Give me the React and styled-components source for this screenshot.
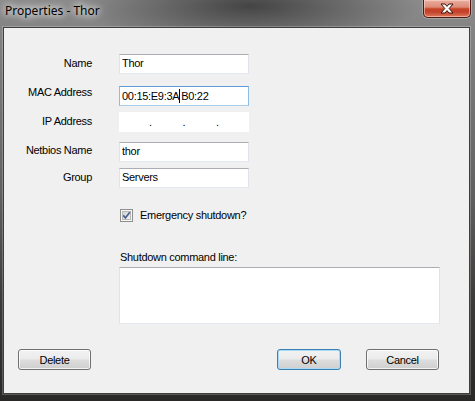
import React from 'react';
import styled, { createGlobalStyle } from 'styled-components';

const Global = createGlobalStyle`
  html, body { margin: 0; padding: 0; }
  body {
    width: 475px;
    height: 401px;
    overflow: hidden;
    font-family: "Liberation Sans", Arial, sans-serif;
  }
`;

const Window = styled.div`
  width: 475px;
  height: 401px;
  box-sizing: border-box;
  display: flex;
  flex-direction: column;
  padding: 0 5px 7px 3px;
  background:
    radial-gradient(ellipse 170px 40px at 250px 6px, rgba(45,45,45,0.75), rgba(45,45,45,0) 100%),
    linear-gradient(180deg, #8b8b8b 0px, #7c7c7c 60px, #626262 190px, #3d3b3a 300px, #2a2827 401px);
`;

const TitleBar = styled.div`
  height: 27px;
  display: flex;
  align-items: flex-start;
  justify-content: space-between;
  margin-right: -1px;
`;

const Title = styled.span`
  padding: 3px 0 0 2px;
  font-family: "Noto Sans", "Liberation Sans", sans-serif;
  font-size: 12px;
  line-height: 16px;
  color: #000;
  text-shadow:
    0 0 6px rgba(255, 255, 255, 0.95),
    0 0 10px rgba(255, 255, 255, 0.8),
    0 0 14px rgba(255, 255, 255, 0.6);
`;

const CloseButton = styled.div`
  width: 48px;
  height: 18px;
  box-sizing: border-box;
  display: flex;
  align-items: center;
  justify-content: center;
  border: 1px solid #4a1a10;
  border-top: none;
  border-radius: 0 0 5px 5px;
  background: linear-gradient(180deg, #eab0a2 0%, #dc8a76 42%, #c84428 52%, #c3412a 70%, #e0785a 100%);
  box-shadow: inset 0 0 0 1px rgba(255, 220, 210, 0.55), 0 0 0 1px rgba(255,255,255,0.25);
`;

const Client = styled.div`
  flex: 1;
  display: flex;
  flex-direction: column;
  background: #f0f0f0;
  border: 1px solid #3e3e3e;
  box-shadow: 0 0 0 1px rgba(255, 255, 255, 0.22);
  font-size: 11px;
  line-height: 13px;
  letter-spacing: -0.3px;
  color: #000;
`;

const Form = styled.div`
  display: flex;
  flex-direction: column;
  padding-top: 26px;
`;

const Row = styled.div`
  display: flex;
  align-items: flex-start;
  margin-top: ${p => p.$mt || 0}px;
`;

const Label = styled.div`
  width: 88px;
  margin-right: 27px;
  margin-top: ${p => p.$dy || 0}px;
  text-align: right;
  white-space: nowrap;
`;

const Field = styled.div`
  width: 130px;
  height: 20px;
  box-sizing: border-box;
  padding: 2px 2px;
  background: #fff;
  border: 1px solid;
  border-color: ${p => p.$focused
    ? '#5c9bd3 #8dbde6 #a9cfee #8dbde6'
    : '#abadb3 #e2e3ea #e3e9ef #e2e3ea'};
  white-space: nowrap;
  overflow: hidden;
`;

const Caret = styled.span`
  display: inline-block;
  width: 1px;
  height: 14px;
  margin: 0 1px 0 0;
  vertical-align: -3px;
  background: #000;
`;

const IpField = styled.div`
  width: 130px;
  height: 20px;
  box-sizing: border-box;
  padding-top: 4px;
  display: flex;
  background: #fff;
`;

const IpSegment = styled.span`
  flex: 1;
`;

const IpDot = styled.span`
  width: 4px;
  text-align: center;
`;

const CheckRow = styled.label`
  display: flex;
  align-items: center;
  height: 13px;
  margin: 21px 0 0 116px;
  gap: 7px;
`;

const CmdLabel = styled.div`
  margin: 29px 0 0 116px;
`;

const TextArea = styled.div`
  width: 321px;
  height: 57px;
  box-sizing: border-box;
  margin: 3px 0 0 115px;
  background: #fff;
  border: 1px solid;
  border-color: #abadb3 #e2e3ea #e3e9ef #e2e3ea;
`;

const ButtonRow = styled.div`
  display: flex;
  justify-content: space-between;
  margin-top: 25px;
  padding: 0 30px 0 14px;
`;

const ButtonGroup = styled.div`
  display: flex;
  gap: 25px;
`;

const Button = styled.button`
  width: ${p => p.$w || 73}px;
  height: 21px;
  box-sizing: border-box;
  padding: 0;
  font-family: "Liberation Sans", Arial, sans-serif;
  font-size: 11px;
  letter-spacing: -0.3px;
  color: #000;
  border: 1px solid ${p => (p.$default ? '#3c7fb1' : '#707070')};
  border-radius: 3px;
  background: linear-gradient(180deg, #f2f2f2 0%, #ebebeb 48%, #dddddd 52%, #cfcfcf 100%);
  box-shadow: inset 0 0 0 1px ${p => (p.$default ? '#a9dbf6' : 'rgba(255,255,255,0.75)')};
`;

function CloseIcon() {
  return (
    <svg width="14" height="11" viewBox="0 0 14 11">
      <polygon
        points="1,1 5,1 7,3.4 9,1 13,1 9.2,5.5 13,10 9,10 7,7.6 5,10 1,10 4.8,5.5"
        fill="#ffffff"
        stroke="#3a1209"
        strokeWidth="1"
        strokeLinejoin="round"
      />
    </svg>
  );
}

function CheckBox() {
  return (
    <svg width="13" height="13" viewBox="0 0 13 13">
      <defs>
        <linearGradient id="cbg" x1="0" y1="0" x2="1" y2="1">
          <stop offset="0" stopColor="#d0d0d0" />
          <stop offset="1" stopColor="#f4f4f4" />
        </linearGradient>
      </defs>
      <rect x="0.5" y="0.5" width="12" height="12" fill="#f6f6f6" stroke="#8e8f8f" />
      <rect x="2.5" y="2.5" width="8" height="8" fill="url(#cbg)" stroke="#b9b9b9" />
      <path d="M3.3 6.4 L5.4 8.9 L9.8 3.2" fill="none" stroke="#4c5f90" strokeWidth="1.7" />
    </svg>
  );
}

export default function App() {
  return (
    <>
      <Global />
      <Window>
        <TitleBar>
          <Title>Properties - Thor</Title>
          <CloseButton>
            <CloseIcon />
          </CloseButton>
        </TitleBar>
        <Client>
          <Form>
            <Row>
              <Label $dy={3}>Name</Label>
              <Field>Thor</Field>
            </Row>
            <Row $mt={12}>
              <Label $dy={0}>MAC Address</Label>
              <Field $focused>00:15:E9:3A<Caret />B0:22</Field>
            </Row>
            <Row $mt={6}>
              <Label $dy={3}>IP Address</Label>
              <IpField>
                <IpSegment />
                <IpDot>.</IpDot>
                <IpSegment />
                <IpDot>.</IpDot>
                <IpSegment />
                <IpDot>.</IpDot>
                <IpSegment />
              </IpField>
            </Row>
            <Row $mt={10}>
              <Label $dy={2}>Netbios Name</Label>
              <Field>thor</Field>
            </Row>
            <Row $mt={6}>
              <Label $dy={3}>Group</Label>
              <Field>Servers</Field>
            </Row>
            <CheckRow>
              <CheckBox />
              <span>Emergency shutdown?</span>
            </CheckRow>
            <CmdLabel>Shutdown command line:</CmdLabel>
            <TextArea />
          </Form>
          <ButtonRow>
            <Button>Delete</Button>
            <ButtonGroup>
              <Button $default $w={64}>OK</Button>
              <Button>Cancel</Button>
            </ButtonGroup>
          </ButtonRow>
        </Client>
      </Window>
    </>
  );
}
